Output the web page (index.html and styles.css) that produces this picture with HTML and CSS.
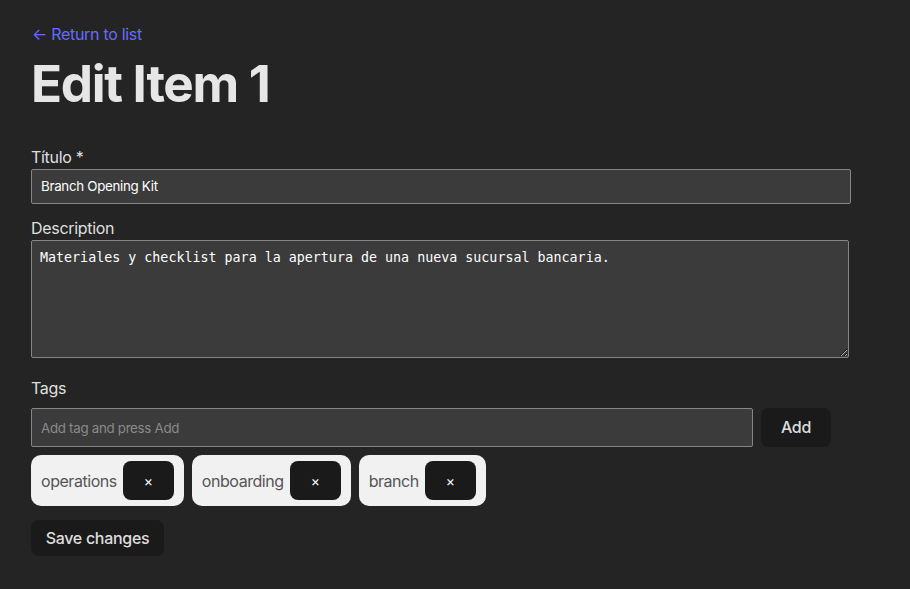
FILE: index.html
```html
<!DOCTYPE html>
<html lang="en">
<head>
<meta charset="utf-8">
<title>Edit Item 1</title>
<link rel="stylesheet" href="styles.css">
</head>
<body>
<main class="page">
  <a class="back-link" href="#">← Return to list</a>
  <h1 class="title">Edit Item 1</h1>
  <form class="form">
    <div class="field">
      <label class="label" for="titulo">Título *</label>
      <input class="text-input wide" id="titulo" type="text" value="Branch Opening Kit">
    </div>
    <div class="field">
      <label class="label" for="desc">Description</label>
      <textarea class="textarea" id="desc">Materiales y checklist para la apertura de una nueva sucursal bancaria.</textarea>
    </div>
    <div class="field">
      <label class="label" for="tag">Tags</label>
      <div class="tag-row">
        <input class="text-input tag-input" id="tag" type="text" placeholder="Add tag and press Add">
        <button class="btn add-btn" type="button">Add</button>
      </div>
      <div class="chips">
        <span class="chip"><span class="chip-text">operations</span><button class="btn chip-x" type="button">×</button></span>
        <span class="chip"><span class="chip-text">onboarding</span><button class="btn chip-x" type="button">×</button></span>
        <span class="chip"><span class="chip-text">branch</span><button class="btn chip-x" type="button">×</button></span>
      </div>
    </div>
    <div class="actions">
      <button class="btn save-btn" type="submit">Save changes</button>
    </div>
  </form>
</main>
</body>
</html>
```

FILE: styles.css
```css
:root {
  color-scheme: dark;
}
* {
  box-sizing: border-box;
}
html, body {
  margin: 0;
  background: #242424;
}
body {
  font-family: Inter, "Noto Sans", sans-serif;
  font-size: 16px;
  line-height: 1.5;
  letter-spacing: -0.3px;
  color: rgba(255, 255, 255, 0.87);
}
.page {
  padding: 22px 0 0 31px;
  width: 851px;
}
.back-link {
  display: block;
  color: #646cff;
  text-decoration: none;
  font-weight: 400;
  padding-left: 1px;
  line-height: 24px;
}
.title {
  margin: 9px 0 34px;
  font-size: 51.2px;
  line-height: 1.1;
  font-weight: 700;
  letter-spacing: -1.3px;
  color: #e6e6e6;
}
.form {
  display: flex;
  flex-direction: column;
}
.field {
  display: flex;
  flex-direction: column;
  margin-bottom: 12px;
}
.label {
  display: block;
  line-height: 24px;
}
.text-input {
  font-family: Inter, "Noto Sans", sans-serif;
  font-size: 13.33px;
  letter-spacing: -0.3px;
  background: #3b3b3b;
  color: #fff;
  border: 1px solid #858585;
  border-radius: 2px;
  padding: 8px 9px;
  line-height: 17px;
  margin: 0;
}
.text-input::placeholder {
  color: #8a8a8a;
}
.wide {
  width: 820px;
}
.textarea {
  display: block;
  width: 818px;
  height: 118px;
  font-family: "DejaVu Sans Mono", monospace;
  font-size: 13.33px;
  line-height: 16px;
  letter-spacing: 0;
  background: #3b3b3b;
  color: #fff;
  border: 1px solid #858585;
  border-radius: 2px;
  padding: 9px 8px;
  margin: 0 0 6px;
  resize: vertical;
}
.tag-row {
  display: flex;
  gap: 8px;
  width: 800px;
  margin-top: 8px;
}
.tag-input {
  flex: 1;
  height: 39px;
}
.btn {
  font-family: inherit;
  font-size: 16px;
  font-weight: 500;
  letter-spacing: -0.3px;
  background: #1a1a1a;
  color: rgba(255, 255, 255, 0.87);
  border: 1px solid transparent;
  border-radius: 8px;
  cursor: pointer;
  line-height: 19px;
  margin: 0;
  white-space: nowrap;
}
.add-btn {
  padding: 9px 0;
  width: 70px;
}
.chips {
  display: flex;
  gap: 8px;
  margin-top: 8px;
}
.chip {
  display: inline-flex;
  align-items: center;
  gap: 6px;
  padding: 6px 10px;
  background: #f1f1f1;
  border-radius: 10px;
  color: #555;
}
.chip-text {
  line-height: 24px;
  letter-spacing: -0.45px;
}
.chip-x {
  width: 51px;
  height: 39px;
  padding: 0;
  color: #fff;
  font-size: 14px;
  font-weight: 400;
}
.actions {
  margin-top: 2px;
}
.save-btn {
  padding: 7px 0;
  height: 36px;
  width: 133px;
}
```
